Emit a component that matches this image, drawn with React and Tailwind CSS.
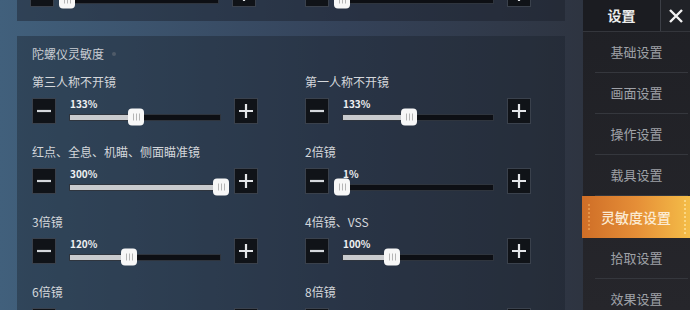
import React from 'react';

const FONT = { fontFamily: '"Noto Sans CJK SC", "Noto Sans", sans-serif' };

const left = [
  { label: '第三人称不开镜', value: 133 },
  { label: '红点、全息、机瞄、侧面瞄准镜', value: 300 },
  { label: '3倍镜', value: 120 },
  { label: '6倍镜', value: 100 },
];
const right = [
  { label: '第一人称不开镜', value: 133 },
  { label: '2倍镜', value: 1 },
  { label: '4倍镜、VSS', value: 100 },
  { label: '8倍镜', value: 100 },
];

const menu = ['基础设置', '画面设置', '操作设置', '载具设置', '灵敏度设置', '拾取设置', '效果设置'];

const StepBtn = ({ plus }) => (
  <div className="w-[24px] h-[26px] bg-[#101318] border border-[#3a414c] flex items-center justify-center shrink-0">
    {plus ? (
      <svg width="16" height="16" viewBox="0 0 16 16">
        <path d="M8 1v14M1 8h14" stroke="#e4e6e9" strokeWidth="2.2" />
      </svg>
    ) : (
      <svg width="16" height="16" viewBox="0 0 16 16">
        <path d="M1 8h14" stroke="#d6d9dd" strokeWidth="2.2" />
      </svg>
    )}
  </div>
);

const Control = ({ value, showPct = true }) => {
  const frac = (value - 1) / 299;
  return (
    <div className="flex items-end h-[26px]">
      <StepBtn />
      <div className="ml-[13px] w-[152px] flex flex-col h-[26px]">
        <div className="h-[12px] leading-[12px] text-[10px] font-bold text-[#eef0f2] pl-[1px]">
          {showPct ? `${value}%` : ''}
        </div>
        <div className="relative h-[14px] flex items-center">
          <div className="w-full h-[7px] flex border border-[#2f353e] bg-[#0d0f14]">
            <div className="h-full bg-[#c9cbce]" style={{ width: `${frac * 100}%` }} />
          </div>
          <div
            className="absolute top-1/2 -translate-y-1/2 w-[16px] h-[17px] rounded-[4px] bg-[#f7f7f7] flex items-center justify-center gap-[2px]"
            style={{ left: `${frac * 152 - 8}px` }}
          >
            <span className="w-[1px] h-[7px] bg-[#b5b5b5]" />
            <span className="w-[1px] h-[7px] bg-[#b5b5b5]" />
            <span className="w-[1px] h-[7px] bg-[#b5b5b5]" />
          </div>
        </div>
      </div>
      <div className="ml-[13px]">
        <StepBtn plus />
      </div>
    </div>
  );
};

const Row = ({ label, value }) => (
  <div className="mb-[20px]">
    <div className="h-[16px] leading-[16px] text-[12px] text-[#d4d7db] whitespace-nowrap">{label}</div>
    <div className="mt-[8px]">
      <Control value={value} />
    </div>
  </div>
);

export default function App() {
  return (
    <div
      className="w-[690px] h-[310px] overflow-hidden flex bg-gradient-to-r from-[#41607c] via-[#344259] to-[#2b2e36]"
      style={FONT}
    >
      <div className="w-[583px] pl-[17px] pr-[18px] flex flex-col shrink-0">
        {/* previous section, cut at the top */}
        <div className="h-[21px] overflow-hidden bg-[#1a202b]/45 shrink-0">
          <div className="-mt-[19px] pl-[13px] grid grid-cols-[275px_273px]">
            <Control value={1} showPct={false} />
            <Control value={1} showPct={false} />
          </div>
        </div>

        {/* gyroscope section */}
        <div className="mt-[15px] flex-1 overflow-hidden bg-[#1a202b]/40 pl-[15px] pt-[11px]">
          <div className="flex items-center h-[14px] leading-[14px] text-[12px] text-[#c9cdd3]">
            陀螺仪灵敏度
            <span className="ml-[8px] w-[4px] h-[4px] rounded-full bg-[#4f5a68]" />
          </div>
          <div className="mt-[13px] grid grid-cols-[273px_273px]">
            <div>
              {left.map((r) => (
                <Row key={r.label} {...r} />
              ))}
            </div>
            <div>
              {right.map((r) => (
                <Row key={r.label} {...r} />
              ))}
            </div>
          </div>
        </div>
      </div>

      {/* sidebar */}
      <div className="w-[107px] shrink-0 bg-gradient-to-b from-[#1f2025] to-[#26262b] flex flex-col">
        <div className="h-[32px] flex shrink-0 border-b border-[#34363c]">
          <div className="flex-1 flex items-center justify-center bg-[#1b1c21] text-[14px] font-bold text-[#ececec]">
            设置
          </div>
          <div className="w-[30px] flex items-center justify-center bg-[#202227] border-l border-[#3c3f46]">
            <svg width="16" height="16" viewBox="0 0 16 16">
              <path d="M2 2l12 12M14 2L2 14" stroke="#f2f2f2" strokeWidth="2.4" />
            </svg>
          </div>
        </div>
        {menu.map((m) => {
          const active = m === '灵敏度设置';
          if (active) {
            return (
              <div
                key={m}
                className="relative h-[42px] -ml-[1px] flex items-center justify-center bg-gradient-to-r from-[#cf6e27] via-[#e58e37] to-[#f4bd48] text-[14px] font-medium text-[#fcebd2] shrink-0"
              >
                <span className="absolute left-[6px] top-[8px] h-[26px] border-l-2 border-dotted border-[#f0a455]/70" />
                <span className="absolute right-[4px] top-[4px] h-[34px] border-l-2 border-dotted border-[#fde39a]/70" />
                {m}
              </div>
            );
          }
          return (
            <div key={m} className="h-[41px] shrink-0 flex flex-col">
              <div className="flex-1 flex items-center justify-center text-[13px] text-[#9fa1a7]">{m}</div>
              <div className="ml-[12px] mr-[2px] h-[1px] bg-[#35373d]" />
            </div>
          );
        })}
      </div>
    </div>
  );
}
